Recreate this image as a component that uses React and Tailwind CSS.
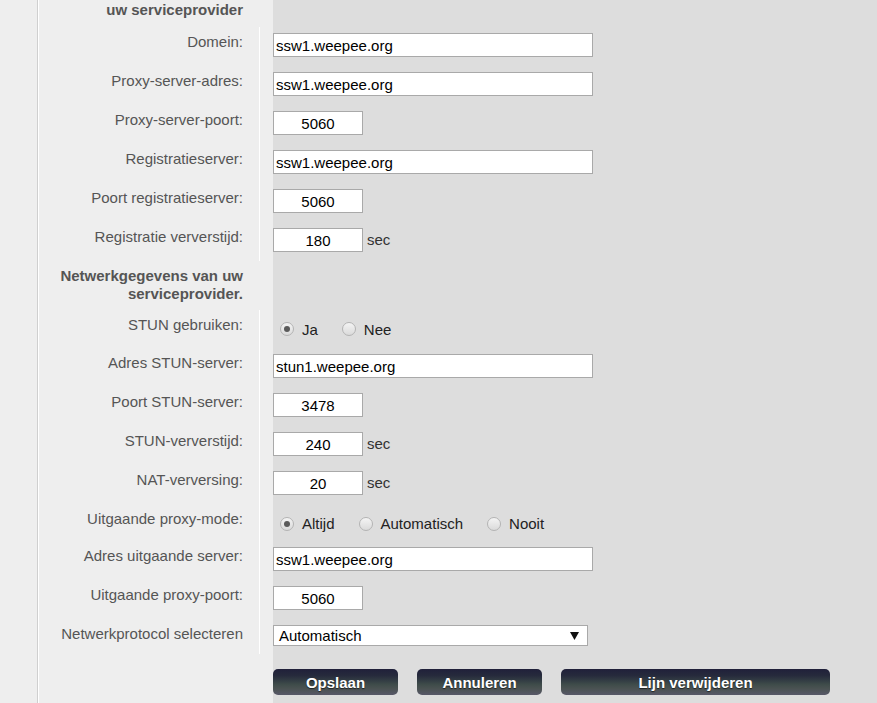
import React from "react";

function Label({ children, bold, line = true, pt = "pt-[6px]" }) {
  return (
    <div className="w-[234px] shrink-0 bg-[#eeeeee]">
      <div
        className={`w-[221px] h-full text-right pr-[16px] leading-[18px] ${pt} ${
          line ? "border-r border-white" : "border-r border-transparent"
        } ${bold ? "font-bold text-[#555555]" : "text-[#555555]"}`}
      >
        {children}
      </div>
    </div>
  );
}

function Row({ h, label, bold, line = true, lpt, rightClass = "pt-[6px]", children }) {
  return (
    <div className={`flex ${h}`}>
      <Label bold={bold} line={line} pt={lpt}>
        {label}
      </Label>
      <div className={`flex-1 bg-[#dddddd] ${rightClass}`}>{children}</div>
    </div>
  );
}

function WideInput({ value }) {
  return (
    <div className="w-[320px] h-[24px] border border-[#a9a9a9] bg-white pl-[2px] flex items-center text-black leading-none">
      {value}
    </div>
  );
}

function SmallInput({ value, suffix }) {
  return (
    <div className="flex items-center">
      <div className="w-[90px] h-[24px] border border-[#a9a9a9] bg-white flex items-center justify-center text-black leading-none">
        {value}
      </div>
      {suffix && <span className="ml-[4px] text-[#333333]">{suffix}</span>}
    </div>
  );
}

function Radio({ checked, label, last }) {
  return (
    <div className={`flex items-center ${last ? "" : "mr-[24px]"}`}>
      <span className="w-[14px] h-[14px] rounded-full border border-[#b4b4b4] bg-[linear-gradient(to_bottom,#f4f4f4,#dadada)] flex items-center justify-center">
        {checked && <span className="w-[6px] h-[6px] rounded-full bg-[#5a5a5a]" />}
      </span>
      <span className="ml-[8px] text-[#222222] leading-none">{label}</span>
    </div>
  );
}

function Button({ children, w }) {
  return (
    <div
      className={`${w} h-[26px] rounded-[5px] flex items-center justify-center text-white font-bold leading-none bg-[linear-gradient(to_bottom,#20203a_0%,#262a3c_25%,#333d44_45%,#3f4c4a_60%,#4a5252_75%,#585868_100%)] [text-shadow:0_1px_1px_rgba(0,0,0,0.6)]`}
    >
      {children}
    </div>
  );
}

export default function App() {
  return (
    <div className="flex min-h-[703px] w-[877px] overflow-hidden text-[15px] font-['Liberation_Sans',Arial,sans-serif] bg-[#dddddd]">
      <div className="w-[37px] shrink-0 bg-[#eeeeee]" />
      <div className="w-px shrink-0 bg-[#cfcfcf]" />
      <div className="w-px shrink-0 bg-white" />
      <div className="flex-1 flex flex-col">
        <Row h="h-[27px]" label="uw serviceprovider" bold line={false} lpt="pt-px" />
        <Row h="h-[39px]" label="Domein:">
          <WideInput value="ssw1.weepee.org" />
        </Row>
        <Row h="h-[39px]" label="Proxy-server-adres:">
          <WideInput value="ssw1.weepee.org" />
        </Row>
        <Row h="h-[39px]" label="Proxy-server-poort:">
          <SmallInput value="5060" />
        </Row>
        <Row h="h-[39px]" label="Registratieserver:">
          <WideInput value="ssw1.weepee.org" />
        </Row>
        <Row h="h-[39px]" label="Poort registratieserver:">
          <SmallInput value="5060" />
        </Row>
        <Row h="h-[39px]" label="Registratie ververstijd:">
          <SmallInput value="180" suffix="sec" />
        </Row>
        <Row
          h="h-[49px]"
          bold
          line={false}
          label={
            <>
              Netwerkgegevens van uw
              <br />
              serviceprovider.
            </>
          }
        />
        <Row h="h-[38px]" label="STUN gebruiken:" rightClass="flex items-center pl-[7px]">
          <Radio checked label="Ja" />
          <Radio label="Nee" last />
        </Row>
        <Row h="h-[39px]" label="Adres STUN-server:">
          <WideInput value="stun1.weepee.org" />
        </Row>
        <Row h="h-[39px]" label="Poort STUN-server:">
          <SmallInput value="3478" />
        </Row>
        <Row h="h-[39px]" label="STUN-ververstijd:">
          <SmallInput value="240" suffix="sec" />
        </Row>
        <Row h="h-[39px]" label="NAT-verversing:">
          <SmallInput value="20" suffix="sec" />
        </Row>
        <Row h="h-[37px]" label="Uitgaande proxy-mode:" rightClass="flex items-center pl-[7px] pt-[2px]">
          <Radio checked label="Altijd" />
          <Radio label="Automatisch" />
          <Radio label="Nooit" last />
        </Row>
        <Row h="h-[39px]" label="Adres uitgaande server:">
          <WideInput value="ssw1.weepee.org" />
        </Row>
        <Row h="h-[39px]" label="Uitgaande proxy-poort:">
          <SmallInput value="5060" />
        </Row>
        <Row h="h-[35px]" label="Netwerkprotocol selecteren">
          <div className="w-[315px] h-[21px] border border-[#a9a9a9] bg-white flex items-center justify-between pl-[5px] pr-[8px] text-black leading-none">
            <span>Automatisch</span>
            <svg width="9" height="8" viewBox="0 0 9 8">
              <path d="M0 0 H9 L4.5 8 Z" fill="#111" />
            </svg>
          </div>
        </Row>
        <div className="flex flex-1">
          <div className="w-[234px] shrink-0 bg-[#eeeeee]" />
          <div className="flex-1 bg-[#dddddd] pt-[15px] flex gap-[19px] items-start">
            <Button w="w-[125px]">Opslaan</Button>
            <Button w="w-[125px]">Annuleren</Button>
            <Button w="w-[269px]">Lijn verwijderen</Button>
          </div>
        </div>
      </div>
    </div>
  );
}
